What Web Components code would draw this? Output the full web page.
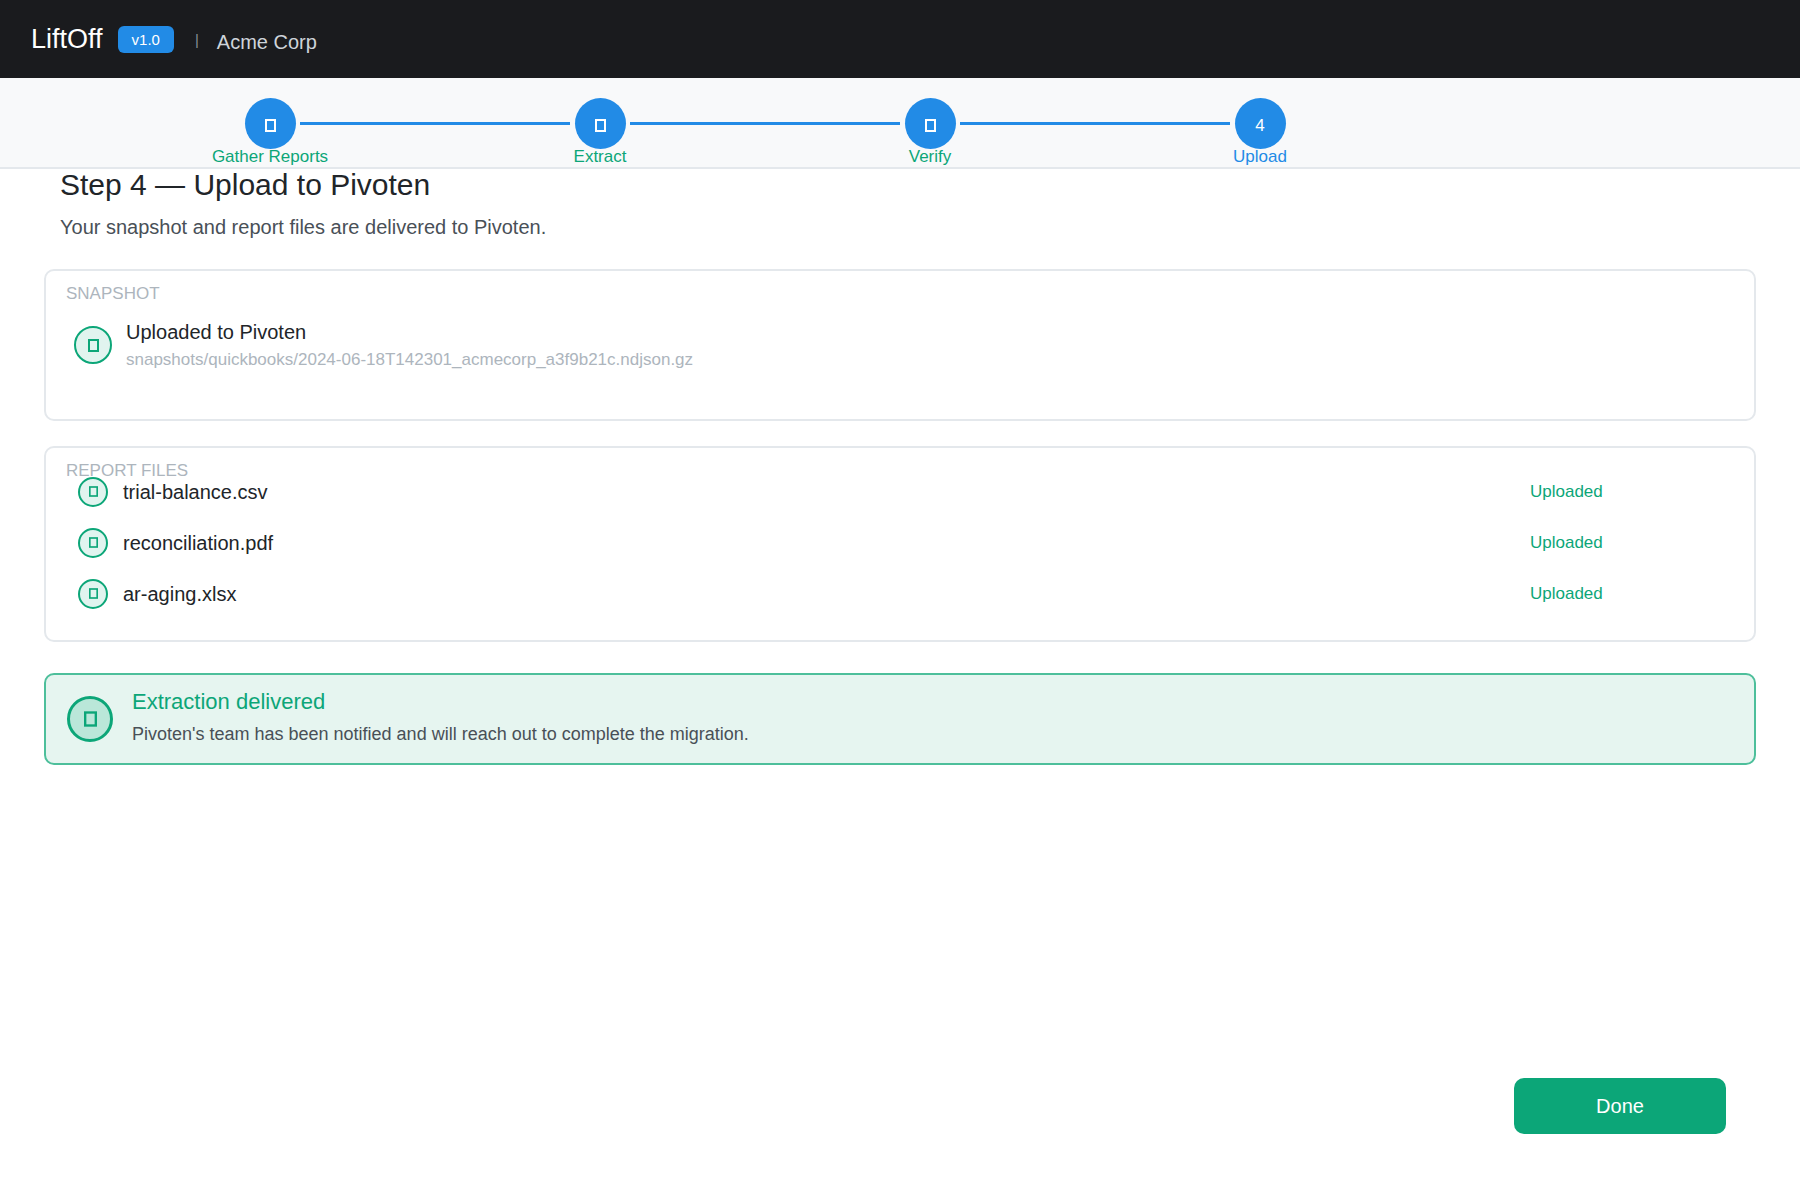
<!DOCTYPE html>
<html lang="en">
<head>
<meta charset="utf-8">
<meta name="viewport" content="width=device-width, initial-scale=1">
<title>LiftOff</title>
<style>
  :root {
    --blue: #228be6;
    --green: #0ca678;
    --green-soft: #e6f5f0;
    --ink: #212529;
    --ink-soft: #495057;
    --muted: #adb5bd;
    --line: #e4e8ec;
  }

  body {
    margin: 0;
    font-family: "Liberation Sans", Arial, sans-serif;
    font-size: 20px;
    line-height: 24px;
    color: var(--ink);
    background: #fff;
  }
</style>
</head>
<body>
<lift-app>
  <app-header slot="header" version="v1.0" company="Acme Corp">LiftOff</app-header>

  <step-bar slot="steps">
    <step-item state="done">Gather Reports</step-item>
    <step-item state="done">Extract</step-item>
    <step-item state="done">Verify</step-item>
    <step-item number="4">Upload</step-item>
  </step-bar>

  <page-intro>
    <span slot="title">Step 4 — Upload to Pivoten</span>
    Your snapshot and report files are delivered to Pivoten.
  </page-intro>

  <section-card label="SNAPSHOT">
    <snapshot-status path="snapshots/quickbooks/2024-06-18T142301_acmecorp_a3f9b21c.ndjson.gz">Uploaded to Pivoten</snapshot-status>
  </section-card>

  <section-card label="REPORT FILES">
    <file-list>
      <file-row status="Uploaded">trial-balance.csv</file-row>
      <file-row status="Uploaded">reconciliation.pdf</file-row>
      <file-row status="Uploaded">ar-aging.xlsx</file-row>
    </file-list>
  </section-card>

  <result-banner>
    <span slot="title">Extraction delivered</span>
    Pivoten's team has been notified and will reach out to complete the migration.
  </result-banner>

  <action-button slot="actions">Done</action-button>
</lift-app>

<script>
// small helper so every element gets its shadow root the same way
class BaseElement extends HTMLElement {
  constructor() {
    super();
    this.attachShadow({ mode: "open" });
  }

  connectedCallback() {
    const template = document.createElement("template");
    template.innerHTML = this.render();
    this.shadowRoot.replaceChildren(template.content.cloneNode(true));
  }

  attr(name) {
    return this.getAttribute(name) || "";
  }
}

class LiftApp extends BaseElement {
  render() {
    return `
<style>
:host {
  display: flex;
  flex-direction: column;
  min-height: 100vh;
}

main {
  flex: 1;
  display: flex;
  flex-direction: column;
  padding: 0 44px;
}

footer {
  display: flex;
  justify-content: flex-end;
  margin-top: auto;
  padding: 30px 30px 66px;
}
</style>

<slot name="header"></slot>
<slot name="steps"></slot>
<main>
  <slot></slot>
  <footer><slot name="actions"></slot></footer>
</main>
`;
  }
}

class AppHeader extends BaseElement {
  render() {
    return `
<style>
:host {
  display: block;
}

header {
  display: flex;
  align-items: flex-start;
  gap: 21px;
  box-sizing: border-box;
  height: 78px;
  padding: 23px 31px 0;
  background: #1a1b1e;
}

.brand,
.company {
  display: flex;
  align-items: center;
}

.brand {
  gap: 15px;
  font-size: 27px;
  line-height: 32px;
  color: #fff;
}

.version {
  padding: 0 14px;
  border-radius: 6px;
  font-size: 15px;
  line-height: 27px;
  background: var(--blue);
}

.company {
  gap: 18px;
  line-height: 38px;
  color: #ced4da;
}

.divider {
  font-size: 15px;
  line-height: 34px;
  align-self: flex-start;
  color: #868e96;
}
</style>

<header>
  <div class="brand">
    <slot></slot>
    <span class="version">${this.attr("version")}</span>
  </div>
  <div class="company">
    <span class="divider">|</span>
    <span>${this.attr("company")}</span>
  </div>
</header>
`;
  }
}

class StepBar extends BaseElement {
  render() {
    return `
<style>
:host {
  display: block;
  background: #f8f9fa;
  border-bottom: 2px solid var(--line);
}

nav {
  display: flex;
  padding: 20px calc(30% - 30px) 2px calc(15% - 30px);
}
</style>

<nav aria-label="Progress"><slot></slot></nav>
`;
  }
}

class StepItem extends BaseElement {
  render() {
    const done = this.attr("state") === "done";
    const mark = done
      ? `<svg width="11" height="13" viewBox="0 0 11 13" fill="none" stroke="currentColor" stroke-width="2" aria-hidden="true"><rect x="1" y="1" width="9" height="11"/></svg>`
      : this.attr("number");

    return `
<style>
:host {
  display: flex;
  flex: 1;
}

:host(:last-child) {
  flex: none;
}

:host(:last-child) .line {
  display: none;
}

.step {
  display: flex;
  flex-direction: column;
  align-items: center;
  width: 60px;
  font-size: 17px;
  line-height: 16px;
  white-space: nowrap;
  color: var(--blue);
}

.done {
  color: var(--green);
}

.circle {
  display: flex;
  align-items: center;
  justify-content: center;
  box-sizing: border-box;
  width: 51px;
  height: 51px;
  padding-top: 4px;
  border-radius: 50%;
  color: #fff;
  background: var(--blue);
}

.line {
  flex: 1;
  height: 3px;
  margin-top: 24px;
  background: var(--blue);
}
</style>

<div class="step ${done ? "done" : ""}">
  <div class="circle">${mark}</div>
  <slot></slot>
</div>
<div class="line"></div>
`;
  }
}

class PageIntro extends BaseElement {
  render() {
    return `
<style>
:host {
  display: block;
  padding: 0 16px;
  margin-bottom: 30px;
}

h1 {
  margin: 0 0 14px;
  font-size: 30px;
  font-weight: normal;
  line-height: 32px;
}

p {
  margin: 0;
  color: var(--ink-soft);
}
</style>

<h1><slot name="title"></slot></h1>
<p><slot></slot></p>
`;
  }
}

class SectionCard extends BaseElement {
  render() {
    return `
<style>
:host {
  display: block;
  padding: 13px 20px 21px;
  margin-bottom: 25px;
  border: 2px solid var(--line);
  border-radius: 10px;
}

h2 {
  margin: 0;
  font-size: 17px;
  font-weight: normal;
  line-height: 20px;
  color: var(--muted);
}
</style>

<h2>${this.attr("label")}</h2>
<slot></slot>
`;
  }
}

class StatusMark extends BaseElement {
  render() {
    return `
<style>
:host {
  display: flex;
  align-items: center;
  justify-content: center;
  flex: none;
  box-sizing: border-box;
  width: 38px;
  height: 38px;
  border: 2px solid var(--green);
  border-radius: 50%;
  color: var(--green);
  background: #e1f4ef;
}

svg {
  width: 11px;
  height: 13px;
}

:host([size="small"]) {
  width: 30px;
  height: 30px;
}

:host([size="small"]) svg {
  width: 9px;
  height: 11px;
}

:host([size="large"]) {
  width: 46px;
  height: 46px;
  border-width: 3px;
  background: #bae7d9;
}

:host([size="large"]) svg {
  width: 13px;
  height: 16px;
}
</style>

<svg viewBox="0 0 11 13" fill="none" stroke="currentColor" stroke-width="2" aria-hidden="true"><rect x="1" y="1" width="9" height="11"/></svg>
`;
  }
}

class SnapshotStatus extends BaseElement {
  render() {
    return `
<style>
:host {
  display: flex;
  align-items: center;
  gap: 14px;
  padding: 16px 8px 28px;
}

.text {
  display: grid;
  gap: 6px;
}

.path {
  font-size: 17px;
  line-height: 20px;
  color: var(--muted);
}
</style>

<status-mark></status-mark>
<div class="text">
  <slot></slot>
  <span class="path">${this.attr("path")}</span>
</div>
`;
  }
}

class FileList extends BaseElement {
  render() {
    // the first row is pulled up under the card label
    return `
<style>
:host {
  display: block;
  margin-top: -15px;
}
</style>

<div role="list"><slot></slot></div>
`;
  }
}

class FileRow extends BaseElement {
  connectedCallback() {
    super.connectedCallback();
    this.setAttribute("role", "listitem");
  }

  render() {
    return `
<style>
:host {
  display: flex;
  align-items: center;
  gap: 15px;
  height: 51px;
  padding-left: 12px;
}

.name {
  flex: 1;
}

.status {
  width: 204px;
  font-size: 17px;
  line-height: 25px;
  color: var(--green);
}
</style>

<status-mark size="small"></status-mark>
<span class="name"><slot></slot></span>
<span class="status">${this.attr("status")}</span>
`;
  }
}

class ResultBanner extends BaseElement {
  render() {
    return `
<style>
:host {
  display: flex;
  align-items: center;
  gap: 19px;
  padding: 12px 21px 13px;
  margin-top: 6px;
  border: 2px solid #4dbf9b;
  border-radius: 10px;
  background: var(--green-soft);
}

.text {
  padding-bottom: 4px;
}

h2 {
  margin: 0 0 5px;
  font-size: 22px;
  font-weight: normal;
  line-height: 30px;
  color: var(--green);
}

p {
  margin: 0;
  font-size: 18px;
  color: var(--ink-soft);
}
</style>

<status-mark size="large"></status-mark>
<div class="text">
  <h2><slot name="title"></slot></h2>
  <p><slot></slot></p>
</div>
`;
  }
}

class ActionButton extends BaseElement {
  render() {
    return `
<style>
:host {
  display: block;
}

button {
  min-width: 212px;
  padding: 16px 24px;
  border: none;
  border-radius: 10px;
  font: inherit;
  color: #fff;
  background: var(--green);
  cursor: pointer;
}

button:hover {
  filter: brightness(0.95);
}
</style>

<button type="button"><slot></slot></button>
`;
  }
}

customElements.define("status-mark", StatusMark);
customElements.define("lift-app", LiftApp);
customElements.define("app-header", AppHeader);
customElements.define("step-bar", StepBar);
customElements.define("step-item", StepItem);
customElements.define("page-intro", PageIntro);
customElements.define("section-card", SectionCard);
customElements.define("snapshot-status", SnapshotStatus);
customElements.define("file-list", FileList);
customElements.define("file-row", FileRow);
customElements.define("result-banner", ResultBanner);
customElements.define("action-button", ActionButton);
</script>
</body>
</html>
